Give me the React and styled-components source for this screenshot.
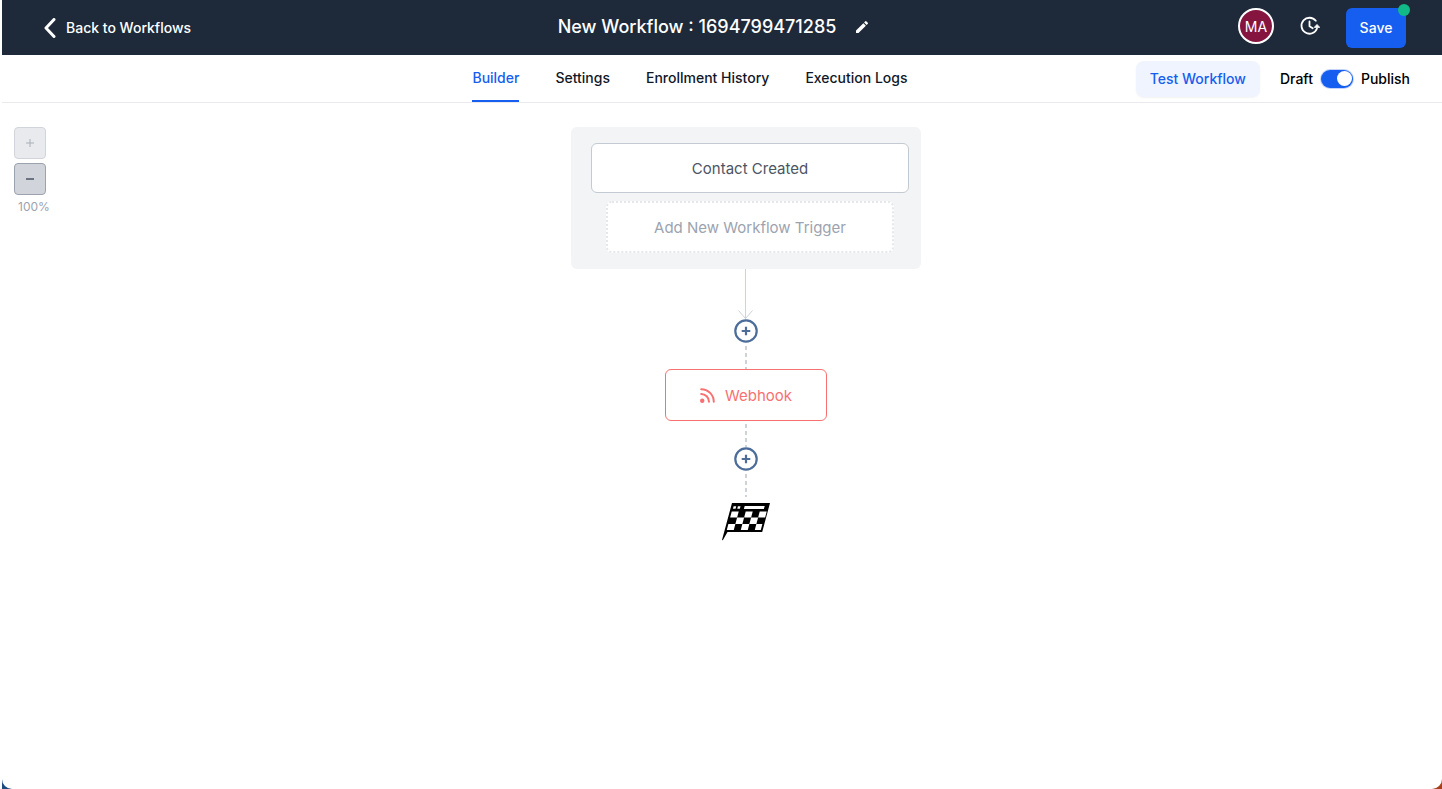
import { useState } from "react";
import styled, { createGlobalStyle } from "styled-components";
import { MdEdit } from "react-icons/md";

const colors = {
  navy: "#1e2a3a",
  blue: "#155eef",
  text: "#101828",
  muted: "#9ca3af",
  line: "#d0d2da",
  step: "#4c6d9a",
  webhook: "#f87171",
};

const GlobalStyle = createGlobalStyle`
  * {
    box-sizing: border-box;
  }
  body {
    margin: 0;
    background: #fff;
    font-family: Inter, "Liberation Sans", sans-serif;
    font-size: 14px;
    color: ${colors.text};
  }
  button {
    font-family: inherit;
    cursor: pointer;
  }
  a {
    text-decoration: none;
  }
`;

const Desktop = styled.div`
  margin-left: 2px;
  background: linear-gradient(90deg, #1f4a80 50%, #a8401c 50%);
`;

const Window = styled.div`
  display: flex;
  flex-direction: column;
  min-height: 100vh;
  background: #fff;
  border-radius: 0 0 10px 10px;
`;

const Header = styled.header`
  display: grid;
  grid-template-columns: 1fr auto 1fr;
  align-items: center;
  height: 55px;
  padding: 0 36px 0 20px;
  background: ${colors.navy};
  color: #fff;
`;

const BackLink = styled.a`
  display: flex;
  align-items: center;
  justify-self: start;
  gap: 10px;
  padding-left: 20px;
  color: #fff;
  font-weight: 500;
  line-height: 20px;
`;

const TitleGroup = styled.div`
  display: flex;
  align-items: center;
  gap: 18px;
  padding-bottom: 2px;
`;

const Title = styled.h1`
  margin: 0;
  font-size: 18px;
  font-weight: 500;
  line-height: 28px;
`;

const IconButton = styled.button`
  display: flex;
  align-items: center;
  height: 36px;
  padding: 0;
  border: 0;
  background: none;
  color: #fff;
`;

const HeaderActions = styled.div`
  display: flex;
  align-items: flex-start;
  justify-self: end;
  gap: 26px;
`;

const Avatar = styled.div`
  width: 36px;
  height: 36px;
  border: 2px solid #fff;
  border-radius: 50%;
  background: #85153f;
  font-size: 14px;
  line-height: 34px;
  text-align: center;
`;

const SaveButton = styled.button`
  position: relative;
  width: 60px;
  height: 40px;
  padding: 0;
  border: 0;
  border-radius: 6px;
  background: ${colors.blue};
  color: #fff;
  font-size: 14px;
  font-weight: 500;
`;

const UnsavedDot = styled.span`
  position: absolute;
  top: -4px;
  right: -4px;
  width: 12px;
  height: 12px;
  border-radius: 50%;
  background: #12b886;
`;

const TabBar = styled.div`
  display: grid;
  grid-template-columns: 1fr auto 1fr;
  align-items: center;
  height: 48px;
  padding-right: 32px;
  border-bottom: 1px solid #e9eaee;
`;

const Tabs = styled.nav`
  grid-column: 2;
  display: flex;
  gap: 36px;
  height: 47px;
  margin-right: 32px;
`;

const Tab = styled.a`
  border-bottom: 2px solid ${({ $active }) => ($active ? colors.blue : "transparent")};
  color: ${({ $active }) => ($active ? colors.blue : colors.text)};
  font-weight: 500;
  line-height: 46px;
`;

const TabActions = styled.div`
  display: flex;
  align-items: center;
  justify-self: end;
  gap: 20px;
`;

const TestButton = styled.button`
  height: 36px;
  padding: 0 14px;
  border: 0;
  border-radius: 8px;
  background: #eff4ff;
  box-shadow: 0 1px 2px rgba(16, 24, 40, 0.05);
  color: ${colors.blue};
  font-size: 14px;
  font-weight: 500;
`;

const PublishLabel = styled.label`
  display: flex;
  align-items: center;
  gap: 8px;
  color: #000;
  font-weight: 500;
`;

const Switch = styled.input`
  appearance: none;
  display: flex;
  align-items: center;
  justify-content: ${({ checked }) => (checked ? "flex-end" : "flex-start")};
  width: 32px;
  height: 18px;
  margin: 0;
  padding: 0 1px;
  border-radius: 9px;
  background: ${({ checked }) => (checked ? colors.blue : "#d1d5db")};
  box-shadow: 0 0 0 1px #c3d3fa;

  &::before {
    content: "";
    width: 15px;
    height: 15px;
    border-radius: 50%;
    background: #fff;
  }
`;

const Canvas = styled.main`
  display: flex;
  flex: 1;
  padding-top: 24px;
`;

const ZoomControls = styled.div`
  display: flex;
  flex-direction: column;
  gap: 4px;
  width: 48px;
  padding-left: 12px;
`;

const ZoomButton = styled.button`
  display: flex;
  align-items: center;
  justify-content: center;
  width: 32px;
  height: 32px;
  padding: 0;
  border: 1px solid #9ca3af;
  border-radius: 4px;
  background: #d1d5db;
  color: #6b7280;

  &:disabled {
    border-color: #d1d5db;
    background: #e8eaed;
    color: #a9afb9;
  }
`;

const ZoomLevel = styled.span`
  padding-left: 4px;
  color: ${colors.muted};
  font-size: 12px;
  line-height: 16px;
`;

const Flow = styled.section`
  display: flex;
  flex: 1;
  flex-direction: column;
  align-items: center;
`;

const TriggerGroup = styled.div`
  display: flex;
  flex-direction: column;
  align-items: center;
  gap: 8px;
  width: 350px;
  padding: 16px 12px 16px 20px;
  border-radius: 6px;
  background: #f3f4f6;
`;

const Trigger = styled.button`
  width: 100%;
  height: 50px;
  padding: 0;
  border: 1px solid #c3cad1;
  border-radius: 6px;
  background: #fff;
  color: #4b5563;
  font-size: 15px;
`;

const NewTrigger = styled(Trigger)`
  width: 288px;
  height: 52px;
  border: 2px dotted #e5e7eb;
  color: ${colors.muted};
`;

const DashedLine = styled.div`
  width: 2px;
  height: 26px;
  background: repeating-linear-gradient(transparent 0 3px, ${colors.line} 3px 7px);
`;

const AddStepButton = styled.button`
  display: flex;
  padding: 0;
  border: 0;
  background: none;
  color: ${colors.step};
`;

const ActionNode = styled.button`
  display: flex;
  align-items: center;
  justify-content: center;
  gap: 10px;
  width: 162px;
  height: 52px;
  padding: 0;
  border: 1px solid ${colors.webhook};
  border-radius: 6px;
  background: #fff;
  color: ${colors.webhook};
  font-size: 15px;
`;

const FlagHolder = styled.div`
  display: flex;
  padding-top: 6px;
`;

const ChevronIcon = () => (
  <svg width="14" height="20" viewBox="0 0 14 20" fill="none" stroke="currentColor" strokeWidth="3" aria-hidden="true">
    <path d="M12 1.500 4 10l8 8.500" strokeLinecap="round" strokeLinejoin="round" />
  </svg>
);

const HistoryIcon = () => (
  <svg width="20" height="20" viewBox="0 0 20 20" fill="none" stroke="currentColor" strokeWidth="1.8" aria-hidden="true">
    <path d="M15.800 4.800A8 8 0 1 0 17 12.500" strokeLinecap="round" />
    <path d="M14.200 11.400 17 8.400l2.800 3z" fill="currentColor" strokeWidth="0.8" strokeLinejoin="round" />
    <path d="M9.500 5.400v4.800l3.200 2" strokeLinecap="round" strokeLinejoin="round" />
  </svg>
);

const ArrowLine = () => (
  <svg width="16" height="50" viewBox="0 0 16 50" fill="none" stroke={colors.line} aria-hidden="true">
    <path d="M7.500 0v50M.5 41.500l7 8 7-8" />
  </svg>
);

const AddStep = () => (
  <AddStepButton aria-label="Add step">
    <svg width="24" height="24" viewBox="0 0 24 24" fill="none" stroke="currentColor" strokeWidth="2.2">
      <circle cx="12" cy="12" r="10.700" />
      <path d="M12 7.700v8.600M7.700 12h8.600" />
    </svg>
  </AddStepButton>
);

const FeedIcon = () => (
  <svg width="15" height="15" viewBox="0 0 15 15" fill="none" stroke="currentColor" strokeWidth="2" aria-hidden="true">
    <circle cx="2.200" cy="12.700" r="2.200" fill="currentColor" stroke="none" />
    <path d="M1.200 1.200A12.600 12.600 0 0 1 13.800 13.800M1.200 6A7.800 7.800 0 0 1 9 13.800" strokeLinecap="round" />
  </svg>
);

const FinishFlag = () => (
  <svg width="48" height="38" viewBox="0 0 48 38" role="img" aria-label="End of workflow">
    <path d="M10 0h38l-7.800 29H5.500L.8 37.300 0 37z" fill="#000" />
    <g transform="skewX(-15)" fill="#fff">
      <path d="M23.500 3h20v3h-20z" />
      <path d="M12.500 3.300h2.600v2.400h-2.600zM16.800 3.300h2.600v2.400h-2.600z" />
      <path d="M12 8.500h7v6h-7zM26 8.500h7v6h-7zM40 8.500h7v6h-7z" />
      <path d="M19 14.500h7V21h-7zM33 14.500h7V21h-7z" />
      <path d="M12 21h7v6h-7zM26 21h7v6h-7zM40 21h6v6h-6z" />
    </g>
  </svg>
);

const tabs = ["Builder", "Settings", "Enrollment History", "Execution Logs"];

const App = () => {
  const [activeTab, setActiveTab] = useState("Builder");
  const [published, setPublished] = useState(true);
  const [zoom, setZoom] = useState(100);

  return (
    <Desktop>
      <GlobalStyle />
      <Window>
        <Header>
          <BackLink href="#workflows">
            <ChevronIcon />
            Back to Workflows
          </BackLink>
          <TitleGroup>
            <Title>New Workflow : 1694799471285</Title>
            <IconButton aria-label="Rename workflow">
              <MdEdit size={16} />
            </IconButton>
          </TitleGroup>
          <HeaderActions>
            <Avatar>MA</Avatar>
            <IconButton aria-label="Version history">
              <HistoryIcon />
            </IconButton>
            <SaveButton>
              Save
              <UnsavedDot />
            </SaveButton>
          </HeaderActions>
        </Header>

        <TabBar>
          <Tabs>
            {tabs.map((tab) => (
              <Tab key={tab} href="#" $active={tab === activeTab} onClick={() => setActiveTab(tab)}>
                {tab}
              </Tab>
            ))}
          </Tabs>
          <TabActions>
            <TestButton>Test Workflow</TestButton>
            <PublishLabel>
              Draft
              <Switch type="checkbox" checked={published} onChange={(e) => setPublished(e.target.checked)} />
              Publish
            </PublishLabel>
          </TabActions>
        </TabBar>

        <Canvas>
          <ZoomControls>
            <ZoomButton aria-label="Zoom in" disabled={zoom >= 100} onClick={() => setZoom(zoom + 10)}>
              <svg width="8" height="8" viewBox="0 0 8 8" stroke="currentColor">
                <path d="M4 0v8M0 4h8" />
              </svg>
            </ZoomButton>
            <ZoomButton aria-label="Zoom out" disabled={zoom <= 10} onClick={() => setZoom(zoom - 10)}>
              <svg width="8" height="8" viewBox="0 0 8 8" stroke="currentColor" strokeWidth="2">
                <path d="M0 4h8" />
              </svg>
            </ZoomButton>
            <ZoomLevel>{zoom}%</ZoomLevel>
          </ZoomControls>
          <Flow>
            <TriggerGroup>
              <Trigger>Contact Created</Trigger>
              <NewTrigger>Add New Workflow Trigger</NewTrigger>
            </TriggerGroup>
            <ArrowLine />
            <AddStep />
            <DashedLine />
            <ActionNode>
              <FeedIcon />
              Webhook
            </ActionNode>
            <DashedLine />
            <AddStep />
            <DashedLine />
            <FlagHolder>
              <FinishFlag />
            </FlagHolder>
          </Flow>
        </Canvas>
      </Window>
    </Desktop>
  );
};

export default App;
